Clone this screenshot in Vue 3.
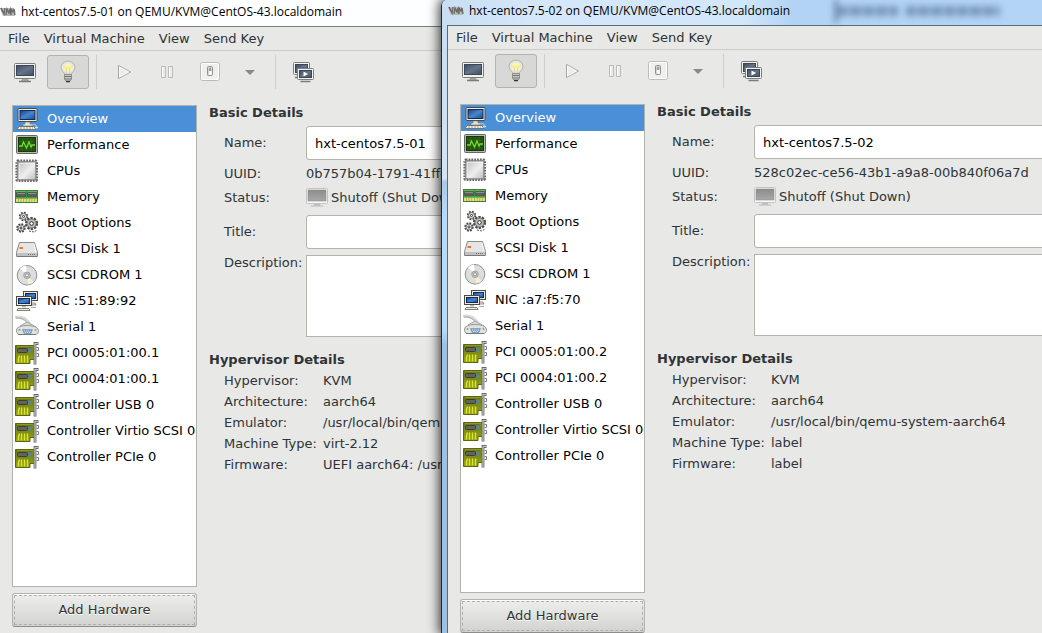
<script setup>
const devices = (pciA, pciB, nic) => [
  { icon: 'computer', label: 'Overview' },
  { icon: 'performance', label: 'Performance' },
  { icon: 'cpu', label: 'CPUs' },
  { icon: 'memory', label: 'Memory' },
  { icon: 'gears', label: 'Boot Options' },
  { icon: 'disk', label: 'SCSI Disk 1' },
  { icon: 'cdrom', label: 'SCSI CDROM 1' },
  { icon: 'network', label: 'NIC ' + nic },
  { icon: 'serial', label: 'Serial 1' },
  { icon: 'card', label: 'PCI ' + pciA },
  { icon: 'card', label: 'PCI ' + pciB },
  { icon: 'card', label: 'Controller USB 0' },
  { icon: 'card', label: 'Controller Virtio SCSI 0' },
  { icon: 'card', label: 'Controller PCIe 0' },
]

const windows = [
  {
    id: 'vm1',
    kind: 'back',
    name: 'hxt-centos7.5-01',
    uuid: '0b757b04-1791-41ff-',
    devices: devices('0005:01:00.1', '0004:01:00.1', ':51:89:92'),
    hypervisor: [
      ['Hypervisor:', 'KVM'],
      ['Architecture:', 'aarch64'],
      ['Emulator:', '/usr/local/bin/qemu-'],
      ['Machine Type:', 'virt-2.12'],
      ['Firmware:', 'UEFI aarch64: /usr/'],
    ],
  },
  {
    id: 'vm2',
    kind: 'front',
    name: 'hxt-centos7.5-02',
    uuid: '528c02ec-ce56-43b1-a9a8-00b840f06a7d',
    devices: devices('0005:01:00.2', '0004:01:00.2', ':a7:f5:70'),
    hypervisor: [
      ['Hypervisor:', 'KVM'],
      ['Architecture:', 'aarch64'],
      ['Emulator:', '/usr/local/bin/qemu-system-aarch64'],
      ['Machine Type:', 'label'],
      ['Firmware:', 'label'],
    ],
  },
]

const menus = ['File', 'Virtual Machine', 'View', 'Send Key']

const tools = [
  { icon: 'console', label: 'Console' },
  { icon: 'bulb', label: 'Details', active: true },
  { separator: true },
  { icon: 'play', label: 'Run' },
  { icon: 'pause', label: 'Pause' },
  { icon: 'power', label: 'Shut down' },
  { icon: 'arrow', label: 'Shutdown options', narrow: true },
  { separator: true },
  { icon: 'snapshots', label: 'Snapshots' },
]
</script>

<template>
  <svg class="defs" aria-hidden="true">
    <defs>
      <linearGradient id="g-navy" x1="0" y1="0" x2="1" y2="1">
        <stop offset="0" stop-color="#3d4b60" /><stop offset=".5" stop-color="#64748a" /><stop offset="1" stop-color="#414f64" />
      </linearGradient>
      <linearGradient id="g-blue" x1="0" y1="0" x2="1" y2="1">
        <stop offset="0" stop-color="#12408c" /><stop offset=".5" stop-color="#4a86cc" /><stop offset="1" stop-color="#174a98" />
      </linearGradient>
      <linearGradient id="g-silver" x1="0" y1="0" x2="1" y2="1">
        <stop offset="0" stop-color="#bdbdbd" /><stop offset=".55" stop-color="#efefef" /><stop offset="1" stop-color="#bcbcbc" />
      </linearGradient>
      <linearGradient id="g-gray" x1="0" y1="0" x2="0" y2="1">
        <stop offset="0" stop-color="#8c8c8c" /><stop offset="1" stop-color="#a8a8a8" />
      </linearGradient>
      <linearGradient id="g-board" x1="0" y1="0" x2="0" y2="1">
        <stop offset="0" stop-color="#68750f" /><stop offset="1" stop-color="#98a61e" />
      </linearGradient>
      <radialGradient id="g-bulb">
        <stop offset="0" stop-color="#fff9b0" /><stop offset=".5" stop-color="#f5f2cf" /><stop offset="1" stop-color="#dededc" />
      </radialGradient>
    </defs>

    <symbol id="i-vmm" viewBox="0 0 16 10">
      <path d="M0 1h14l1 8H3z" fill="#b9b9b9" />
      <path d="M1 1l3 6L5 1M6 8l1-6 2 4 1-4 1 6M11 7l0-5 2 3 1-3 1 6" fill="none" stroke="#6a6a6a" stroke-width="1.400" />
      <path d="M1 1l2 4" stroke="#8d5560" />
    </symbol>

    <symbol id="i-console" viewBox="0 0 24 24">
      <rect x="1.500" y="3.500" width="21" height="15" rx="1" fill="#f1f1ee" stroke="#7b7d79" />
      <rect x="3.500" y="5.500" width="17" height="10" fill="url(#g-navy)" stroke="#3a4557" />
      <path d="M9 19h6l1 2H8z" fill="#a5a5a3" />
      <path d="M6 21.500h12" stroke="#7a7c78" stroke-width="1.500" />
    </symbol>
    <symbol id="i-bulb" viewBox="0 0 24 24">
      <path d="M9 14.500C8.500 12.500 5 11 5 7.500a7 6.500 0 0 1 14 0c0 3.500-3.500 5-4 7z" fill="url(#g-bulb)" stroke="#b3b4b0" />
      <path d="M10.500 14v-5l-2-2 1.500 1h4l1.500-1-2 2v5" fill="none" stroke="#d3cda0" stroke-width=".8" />
      <path d="M8.500 6.500h7v2h-7z" fill="#fff36a" />
      <path d="M8.500 14.500h7v5l-2 2h-3l-2-2z" fill="#c9cac7" stroke="#8c8d89" />
      <path d="M9 16.500h6M9 19h6" stroke="#747571" />
      <path d="M10 21.500h4" stroke="#333" stroke-width="1.500" />
    </symbol>
    <symbol id="i-play" viewBox="0 0 24 24">
      <path d="M6.500 5.500v13L18.500 12z" fill="#ededeb" stroke="#a5a6a3" stroke-linejoin="round" />
      <path d="M7.500 7v10l9-5z" fill="none" stroke="#fff" stroke-width=".8" />
    </symbol>
    <symbol id="i-pause" viewBox="0 0 24 24">
      <path d="M6.500 6.500h4v11h-4zM13.500 6.500h4v11h-4z" fill="#ebebe9" stroke="#babbb8" />
      <path d="M7.500 7.500v9M14.500 7.500v9" stroke="#fff" />
    </symbol>
    <symbol id="i-power" viewBox="0 0 24 24">
      <rect x="2.500" y="2.500" width="19" height="18" rx="2" fill="#f0f0ef" stroke="#bbbcb9" />
      <rect x="3.500" y="3.500" width="17" height="16" rx="1" fill="none" stroke="#fff" />
      <rect x="9.500" y="6.500" width="5" height="9" rx="1" fill="#d4d5d2" stroke="#8f908d" />
      <rect x="11" y="8" width="2" height="3" fill="#9c9d9a" />
      <rect x="11" y="11" width="3" height="4" fill="#f8f8f8" />
    </symbol>
    <symbol id="i-arrow" viewBox="0 0 24 24">
      <path d="M7 10h10l-5 5z" fill="#888a86" />
    </symbol>
    <symbol id="i-snapshots" viewBox="0 0 24 24">
      <rect x="2.500" y="2.500" width="16" height="12" rx="1" fill="#f4f4f2" stroke="#7b7d79" />
      <rect x="4.500" y="4.500" width="12" height="8" fill="url(#g-navy)" stroke="#3a4557" />
      <path d="M4 17.500h4" stroke="#777" stroke-width="1.500" />
      <rect x="6.500" y="8.500" width="16" height="11" rx="1" fill="#f4f4f2" stroke="#7b7d79" />
      <rect x="8.500" y="10.500" width="12" height="7" fill="url(#g-navy)" stroke="#3a4557" />
      <path d="M12.500 11.500v5l4.500-2.500z" fill="#fff" />
      <path d="M9.500 21.500h10" stroke="#7a7c78" stroke-width="1.500" />
    </symbol>
    <symbol id="i-shutoff" viewBox="0 0 22 20">
      <rect x=".5" y=".5" width="21" height="15" rx="1" fill="#f8f8f7" stroke="#c3c3c1" />
      <rect x="2" y="2" width="18" height="11" fill="url(#g-gray)" stroke="#8e8e8e" stroke-width=".6" />
      <path d="M8 16h6v1.500H8z" fill="#bcbcba" />
      <path d="M5 18h12" stroke="#b5b5b3" />
    </symbol>

    <symbol id="i-computer" viewBox="0 0 24 24">
      <rect x="3" y="1.500" width="19" height="13" rx="1" fill="#efede0" stroke="#4c4b43" />
      <rect x="5" y="3.500" width="15" height="9" fill="url(#g-blue)" stroke="#0c2b5e" />
      <path d="M10 15h5v2h2v2H8v-2h2z" fill="#e5e3d6" stroke="#77756a" stroke-width=".6" />
      <path d="M4 19.500h15l2 3H2z" fill="#f1efe4" stroke="#77756a" />
      <path d="M5 21h13" stroke="#a09d90" stroke-dasharray="2 1" />
      <path d="M16 17.500c2 1 5-1 5 1.500" fill="none" stroke="#d8d8cf" />
      <ellipse cx="21.500" cy="20.500" rx="1.500" ry="1" fill="#e8e8e0" />
    </symbol>
    <symbol id="i-performance" viewBox="0 0 24 24">
      <rect x="1.500" y="2.500" width="21" height="18" rx="1" fill="#b7b8b4" stroke="#666864" />
      <rect x="3.500" y="4.500" width="17" height="14" fill="#24540f" stroke="#173808" />
      <path d="M7.500 5v13M12 5v13M16.500 5v13M4 8.500h16M4 13.500h16" stroke="#34701b" stroke-width=".6" />
      <path d="M4 13h3l1.500-4 3 6 2.500-6 2 5 1-2h3" fill="none" stroke="#72dc32" stroke-width="1.300" />
    </symbol>
    <symbol id="i-cpu" viewBox="0 0 24 24">
      <rect x="1.700" y="1.700" width="20" height="20" rx="1" fill="#c9cac7" stroke="#666763" stroke-width="2.600" stroke-dasharray="1.700 1.150" />
      <rect x="2.800" y="2.800" width="18" height="18" fill="url(#g-silver)" stroke="#80817d" />
      <path d="M4.500 19.500v-15h15" fill="none" stroke="#f1f1f1" opacity=".7" />
    </symbol>
    <symbol id="i-memory" viewBox="0 0 24 24">
      <rect x=".5" y="5.500" width="22" height="12" fill="#70b35c" stroke="#3d7f42" />
      <path d="M1.500 7.500h9v4.500h-9zM12.500 7.500h9v4.500h-9z" fill="#596158" stroke="#3a453a" stroke-width=".6" />
      <path d="M2 8.500h8M13 8.500h8" stroke="#8a908a" />
      <path d="M1 15.500h21.500" stroke="#f4dd68" stroke-width="3" stroke-dasharray="2 .7" />
      <path d="M11.500 5v8" stroke="#2e9637" />
    </symbol>
    <symbol id="i-gears" viewBox="0 0 24 24">
      <g fill="none" stroke="#454744">
        <circle cx="8.500" cy="5.500" r="3.800" stroke-width="1.800" stroke-dasharray="1.800 1.180" />
        <circle cx="6" cy="17" r="3.800" stroke-width="1.800" stroke-dasharray="1.800 1.180" />
        <circle cx="16.500" cy="12.500" r="5.500" stroke-width="2.200" stroke-dasharray="2.300 1.150" />
      </g>
      <g fill="#e2e3df" stroke="#62645f" stroke-width=".9">
        <circle cx="8.500" cy="5.500" r="3" />
        <circle cx="6" cy="17" r="3" />
        <circle cx="16.500" cy="12.500" r="4.600" fill="#b8bab5" />
      </g>
      <g fill="#fff" stroke="#30322e">
        <circle cx="8.500" cy="5.500" r="1" />
        <circle cx="6" cy="17" r="1" />
        <circle cx="16.500" cy="12.500" r="1.800" />
      </g>
      <path d="M14 20l5 1 3-2" fill="none" stroke="#555" stroke-dasharray="2 1" />
    </symbol>
    <symbol id="i-disk" viewBox="0 0 24 24">
      <path d="M4.500 5.500h15l3 10v4h-21v-4z" fill="#e5e5e3" stroke="#8a8b87" stroke-linejoin="round" />
      <path d="M2 16h20v3H2z" fill="#c1c2bf" />
      <path d="M2 19.500h20" stroke="#777" />
      <path d="M13 17.500h7" stroke="#777" stroke-dasharray="1 1" />
      <rect x="4.500" y="10" width="3.500" height="2" fill="#e9772b" />
      <path d="M19 7l2 8" stroke="#fff" />
    </symbol>
    <symbol id="i-cdrom" viewBox="0 0 24 24">
      <circle cx="12" cy="12.300" r="9.800" fill="#dedfdc" stroke="#90918e" />
      <path d="M12 12.300L5 5.500a9.500 9.500 0 0 1 6-3z" fill="#fff" />
      <path d="M12 12.300l7 6.800a9.500 9.500 0 0 1-6 2.500z" fill="#f3efcf" />
      <path d="M12 12.300l8.800 2a9.500 9.500 0 0 1-2 4.500z" fill="#d8d5ef" />
      <circle cx="12" cy="12.300" r="3.300" fill="#c4c5c2" stroke="#969794" stroke-width=".8" />
      <circle cx="12" cy="12.300" r="1.500" fill="#fff" stroke="#777" stroke-width=".7" />
    </symbol>
    <symbol id="i-network" viewBox="0 0 24 24">
      <rect x="8.500" y="2.500" width="14" height="9" fill="#eeecdf" stroke="#4c4b43" />
      <rect x="10.500" y="4.500" width="10" height="5" fill="url(#g-blue)" stroke="#0c2b5e" />
      <path d="M14 14h6l1 2h-7z" fill="#eeecdf" stroke="#66645a" stroke-width=".7" />
      <rect x="1.500" y="7.500" width="15" height="9" fill="#eeecdf" stroke="#4c4b43" />
      <rect x="3.500" y="9.500" width="11" height="5" fill="url(#g-blue)" stroke="#0c2b5e" />
      <path d="M7 17h4v1.500H7z" fill="#bbb9ac" />
      <path d="M3 19.500h11l1 2H2z" fill="#eeecdf" stroke="#66645a" stroke-width=".8" />
      <path d="M16 18.500h5" stroke="#aaa99f" />
    </symbol>
    <symbol id="i-serial" viewBox="0 0 24 24">
      <path d="M.5 2.500c5-1 8 0 11 3 2 2 3 4 5 5" fill="none" stroke="#b4b6b2" stroke-width="3" />
      <path d="M.5 2c5-1 8 0 11 3 2 2 3 4 5 5" fill="none" stroke="#e3e4e1" stroke-width="1.200" />
      <path d="M5 11l7-4 9 5" fill="#d9dad7" stroke="#a5a6a3" />
      <path d="M1.500 15c0-6 21-6 22 0 0 3-1 4.500-3 4.500H4.500c-2 0-3-1.500-3-4.500z" fill="#e2e3e1" stroke="#979995" />
      <path d="M3 19.500h18" stroke="#777976" />
      <path d="M7.500 14.500h10l-1.500 4H9z" fill="#7ba6d0" stroke="#7590ab" stroke-width=".6" />
      <path d="M9 16h7M10 17.500h5" stroke="#d4e5f5" stroke-dasharray="1 1" />
      <circle cx="4.500" cy="15" r="1" fill="#999" /><circle cx="20.500" cy="15" r="1" fill="#999" />
    </symbol>
    <symbol id="i-card" viewBox="0 0 24 24">
      <path d="M.5 4.500h19v14H15v4H.5z" fill="url(#g-board)" stroke="#5b6512" />
      <path d="M2 5.500h16v3" fill="none" stroke="#8d9a20" />
      <rect x="2.500" y="7.500" width="10" height="4" rx="1" fill="#60645d" stroke="#3b3f37" />
      <path d="M13 8.500h4M13 10.500h4" stroke="#5385b0" stroke-width="1.300" />
      <path d="M3.500 21.500v-4l1-3M6.500 21.500v-7M9.500 21.500v-7M12.500 21.500v-7" stroke="#dfe722" stroke-width="1.400" fill="none" />
      <path d="M23.500 2.500H20v21" fill="none" stroke="#666864" stroke-width="2.800" />
      <path d="M23 2.500h-3V23" fill="none" stroke="#c2c3c0" stroke-width="1.200" />
      <path d="M21.500 6.500h2v3h-2M21.500 12.500h2v3h-2" fill="none" stroke="#7b7d79" />
    </symbol>
  </svg>

  <main class="desktop">
    <section v-for="win in windows" :key="win.id" :class="['window', win.kind]">
      <header class="titlebar">
        <svg class="app-icon" aria-hidden="true"><use href="#i-vmm" /></svg>
        <h1>{{ win.name }} on QEMU/KVM@CentOS-43.localdomain</h1>
        <span v-if="win.kind === 'front'" class="glass" aria-hidden="true"><i></i><b></b><b></b></span>
      </header>
      <div class="client">
        <nav class="menubar" aria-label="Menu">
          <button v-for="m in menus" :key="m" type="button">{{ m }}</button>
        </nav>
        <div class="toolbar" role="toolbar">
          <template v-for="(t, i) in tools" :key="i">
            <span v-if="t.separator" class="separator"></span>
            <button v-else type="button" :aria-label="t.label" :class="{ active: t.active, narrow: t.narrow }">
              <svg aria-hidden="true"><use :href="'#i-' + t.icon" /></svg>
            </button>
          </template>
        </div>
        <div class="body">
          <aside class="hardware">
            <ul class="devices">
              <li v-for="(d, i) in win.devices" :key="d.label">
                <button type="button" :class="{ selected: i === 0 }">
                  <svg aria-hidden="true"><use :href="'#i-' + d.icon" /></svg>
                  <span>{{ d.label }}</span>
                </button>
              </li>
            </ul>
            <button type="button" class="add"><span>Add Hardware</span></button>
          </aside>
          <div class="details">
            <h2>Basic Details</h2>
            <div class="form">
              <label :for="win.id + '-name'">Name:</label>
              <input :id="win.id + '-name'" type="text" :value="win.name" />
              <span>UUID:</span>
              <span>{{ win.uuid }}</span>
              <span class="top">Status:</span>
              <span class="status">
                <svg aria-hidden="true"><use href="#i-shutoff" /></svg>
                <span>Shutoff (Shut Down)</span>
              </span>
              <label :for="win.id + '-title'">Title:</label>
              <input :id="win.id + '-title'" type="text" />
              <label :for="win.id + '-desc'" class="top">Description:</label>
              <textarea :id="win.id + '-desc'"></textarea>
            </div>
            <h2 class="second">Hypervisor Details</h2>
            <dl>
              <template v-for="row in win.hypervisor" :key="row[0]">
                <dt>{{ row[0] }}</dt>
                <dd>{{ row[1] }}</dd>
              </template>
            </dl>
          </div>
        </div>
      </div>
    </section>
  </main>
</template>

<style>
body { margin: 0; overflow: hidden; }
</style>

<style scoped>
.defs { position: absolute; width: 0; height: 0; }
.desktop {
  position: relative;
  height: 100vh;
  overflow: hidden;
  background: #e8e8e6;
  color: #2e3436;
  font: 13px/16px "DejaVu Sans", sans-serif;
  white-space: nowrap;
}
button, input, textarea {
  box-sizing: border-box;
  margin: 0;
  font: inherit;
  color: inherit;
}
button { border: 0; padding: 0; background: none; }
.window { position: absolute; display: flex; flex-direction: column; }
.back { inset: 0; }
.front {
  inset: 0 -16px 0 441px;
  padding-left: 5px;
  border-left: 1px solid #1b2a3a;
  border-top-left-radius: 6px;
  background: linear-gradient(#c5ddf4, #d4e4f4 178px, #a9c9e9 182px, #b8daf9 215px, #b8daf9 330px, #a0c0e2 345px);
  box-shadow: 0 0 12px 2px rgba(0, 0, 0, 0.75);
}
.titlebar {
  flex: none;
  display: flex;
  align-items: center;
  box-sizing: border-box;
  height: 27px;
  padding-bottom: 3px;
  border-bottom: 1px solid #7a7c7c;
  background: linear-gradient(90deg, #fff, #f8fdff);
  color: #000;
}
.app-icon { width: 16px; height: 10px; margin-right: 5px; }
h1 {
  margin: 0;
  font: 12px/16px "Open Sans", sans-serif;
}
.front .titlebar {
  height: 26px;
  margin-left: -5px;
  padding: 0 0 4px 6px;
  border-bottom: 0;
  border-top-left-radius: 5px;
  background: linear-gradient(90deg, #c9def2, #d5e8fa 100px, #d3e7fb 300px, #b2d3f4 350px, #b4d4f6);
}
/* what shows through the translucent title bar */
.glass {
  display: flex;
  align-items: center;
  gap: 8px;
  margin-left: 44px;
  filter: blur(3px);
}
.glass i { width: 4px; height: 24px; margin-right: -8px; background: #6f8eae; }
.glass b { width: 60px; height: 10px; background: repeating-linear-gradient(90deg, #7896b7 0 9px, #94b4d5 9px 13px); }
.glass b:last-child { width: 94px; }
.client {
  flex: 1;
  min-height: 0;
  display: flex;
  flex-direction: column;
  background: #e8e8e6;
}
.front .client {
  margin-top: -1px;
  border-left: 1px solid #5a6b7b;
  border-top: 1px solid #5a6b7b;
}
.menubar {
  flex: none;
  display: flex;
  gap: 14px;
  height: 23px;
  padding-left: 8px;
  border-bottom: 1px solid #cbcbc9;
}
.toolbar {
  flex: none;
  display: flex;
  gap: 1px;
  padding: 4px 4px 0;
}
.toolbar button {
  display: flex;
  align-items: center;
  justify-content: center;
  width: 42px;
  height: 34px;
}
.toolbar button.narrow { width: 36px; }
.toolbar button.active {
  border: 1px solid #b3b4b1;
  border-radius: 3px;
  background: #d8d8d6;
}
.toolbar svg { width: 24px; height: 24px; }
.separator { width: 1px; margin: 0 5px 0 6px; background: #cececc; }
.body {
  flex: 1;
  min-height: 0;
  display: flex;
  gap: 12px;
  padding: 16px 0 6px 12px;
}
.front .body { padding-bottom: 0; }
.hardware {
  flex: none;
  display: flex;
  flex-direction: column;
  gap: 6px;
  width: 185px;
}
.devices {
  flex: 1;
  min-height: 0;
  margin: 0;
  padding: 0;
  border: 1px solid #b3b3ae;
  background: #fff;
  color: #000;
  list-style: none;
  overflow: hidden;
}
.devices button {
  display: flex;
  align-items: center;
  gap: 8px;
  width: 100%;
  height: 26px;
  padding-left: 2px;
}
.devices svg { width: 24px; height: 24px; flex: none; }
.devices .selected { background: #4a90d9; color: #fff; }
.add {
  flex: none;
  height: 34px;
  padding: 1px;
  border: 1px solid #b3b4b0;
  border-bottom-color: #8d8e8a;
  border-radius: 3px;
  background: linear-gradient(#eeeeed, #d2d2d0);
  box-shadow: inset 0 1px #fff;
}
.add span {
  display: block;
  height: 28px;
  border: 1px dashed #b0b1ae;
  line-height: 28px;
  text-shadow: 0 1px #fff;
}
.details { flex: 1; min-width: 0; }
h2 { margin: 0 0 5px; font: bold 13px/16px "DejaVu Sans", sans-serif; }
.form {
  display: grid;
  grid-template-columns: 76px 1fr;
  grid-template-rows: 34px 16px 21px 34px 82px;
  gap: 6px;
  align-items: center;
  margin-left: 15px;
}
.top { align-self: start; }
.status { display: flex; gap: 3px; align-self: start; }
span.top, .status { line-height: 20px; }
.status svg { width: 22px; height: 20px; }
input, textarea {
  width: 100%;
  height: 100%;
  border: 1px solid #b3b3ae;
  background: #fff;
  color: #000;
}
input { padding: 0 8px; border-radius: 3px; }
textarea { display: block; padding: 4px; resize: none; }
h2.second { margin: 15px 0 2px; }
dl {
  display: grid;
  grid-template-columns: 99px 1fr;
  margin: 0 0 0 15px;
  line-height: 21px;
}
dd { margin: 0; }
</style>
